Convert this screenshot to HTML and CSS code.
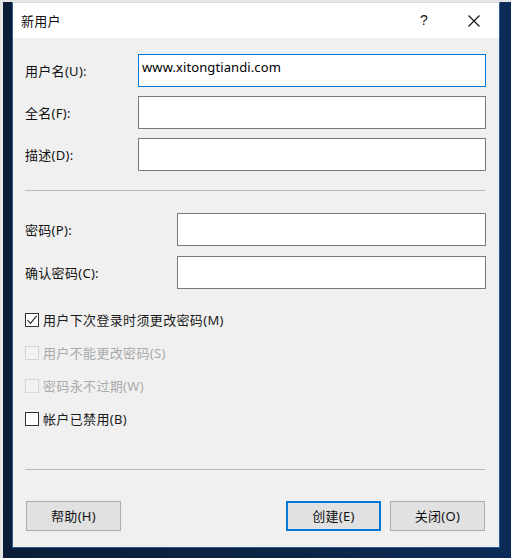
FILE: index.html
```html
<!DOCTYPE html>
<html lang="zh-CN">
<head>
<meta charset="utf-8">
<title>新用户</title>
<link rel="stylesheet" href="styles.css">
</head>
<body>
<div class="frame">
  <div class="dialog">
    <div class="titlebar">
      <span class="title">新用户</span>
      <div class="tb-buttons">
        <span class="tb-btn help">?</span>
        <span class="tb-btn close">
          <svg width="12" height="12" viewBox="0 0 12 12"><path d="M0.5 0.5 L11.5 11.5 M11.5 0.5 L0.5 11.5" stroke="#111" stroke-width="1.1" fill="none"/></svg>
        </span>
      </div>
    </div>
    <div class="content">
      <div class="group">
        <div class="row">
          <label class="lbl lbl-a">用户名(U):</label>
          <div class="input focused">www.xitongtiandi.com</div>
        </div>
        <div class="row">
          <label class="lbl lbl-a">全名(F):</label>
          <div class="input"></div>
        </div>
        <div class="row">
          <label class="lbl lbl-a">描述(D):</label>
          <div class="input"></div>
        </div>
      </div>
      <div class="sep sep1"></div>
      <div class="group pw">
        <div class="row">
          <label class="lbl lbl-b">密码(P):</label>
          <div class="input"></div>
        </div>
        <div class="row">
          <label class="lbl lbl-b">确认密码(C):</label>
          <div class="input"></div>
        </div>
      </div>
      <div class="checks">
        <div class="check">
          <span class="box">
            <svg width="12" height="12" viewBox="0 0 12 12"><path d="M1.5 6 L4.5 9.3 L10.6 1.8" stroke="#222" stroke-width="1.1" fill="none"/></svg>
          </span>
          <span class="ctext">用户下次登录时须更改密码(M)</span>
        </div>
        <div class="check disabled">
          <span class="box"></span>
          <span class="ctext">用户不能更改密码(S)</span>
        </div>
        <div class="check disabled">
          <span class="box"></span>
          <span class="ctext">密码永不过期(W)</span>
        </div>
        <div class="check">
          <span class="box"></span>
          <span class="ctext">帐户已禁用(B)</span>
        </div>
      </div>
      <div class="sep sep2"></div>
      <div class="buttons">
        <button class="btn">帮助(H)</button>
        <div class="spacer"></div>
        <button class="btn default">创建(E)</button>
        <button class="btn">关闭(O)</button>
      </div>
    </div>
  </div>
</div>
</body>
</html>
```

FILE: styles.css
```css
* { box-sizing: border-box; }
html, body { margin: 0; padding: 0; }
body {
  width: 511px;
  height: 558px;
  overflow: hidden;
  font-family: "Noto Sans", "Noto Sans CJK SC", sans-serif;
  font-size: 13px;
  color: #111;
}
.frame {
  width: 511px;
  height: 558px;
  background: linear-gradient(90deg, #0b1d38 0%, #0c2547 60%, #0b2c58 100%);
  border-left: 3px solid #e6e6e6;
  border-top: 2px solid #e6e6e6;
  padding: 0 11px 10px 9px;
  display: flex;
}
.dialog {
  flex: 1;
  display: flex;
  flex-direction: column;
  background: #f0f0f0;
  border: 1px solid #2d5c94;
  border-top-color: #d0d8e2;
}
.titlebar {
  height: 35px;
  background: #fff;
  display: flex;
  align-items: center;
  padding-left: 8px;
}
.title { font-size: 13px; line-height: 18px; letter-spacing: 0.3px; }
.tb-buttons {
  margin-left: auto;
  margin-right: 2px;
  display: flex;
  gap: 4px;
  height: 100%;
}
.tb-btn {
  width: 46px;
  display: flex;
  align-items: center;
  justify-content: center;
}
.help {
  font-family: "Liberation Sans", sans-serif;
  font-size: 14px;
  padding-bottom: 1px;
}
.close svg { display: block; }
.content {
  flex: 1;
  display: flex;
  flex-direction: column;
  padding: 16px 13px 0 12px;
}
.group { display: flex; flex-direction: column; gap: 9px; }
.group.pw { gap: 10px; margin-top: 22px; }
.row { display: flex; align-items: center; height: 33px; }
.lbl { flex: none; line-height: 18px; letter-spacing: 0.3px; }
.lbl-a { width: 113px; }
.lbl-b { width: 152px; }
.input {
  flex: 1;
  height: 100%;
  background: #fff;
  border: 1px solid #7a7a7a;
  padding: 3px 3px 0;
  line-height: 18px;
  font-size: 13px;
  letter-spacing: 0.1px;
  color: #000;
}
.input.focused { border-color: #0078d7; }
.sep { height: 1px; background: #b9b9b9; margin-right: 1px; }
.sep1 { margin-top: 19px; }
.sep2 { margin-top: 34px; }
.checks { display: flex; flex-direction: column; margin-top: 14px; }
.check { height: 33px; display: flex; align-items: center; }
.box {
  width: 14px;
  height: 14px;
  border: 1px solid #333;
  background: #fff;
  display: flex;
  align-items: center;
  justify-content: center;
  flex: none;
}
.box svg { display: block; }
.ctext { margin-left: 4px; line-height: 18px; letter-spacing: 0.35px; color: #1a1a1a; }
.check.disabled .box { border-color: #d6d6d6; background: #f3f3f3; }
.check.disabled .ctext { color: #aaaaaa; }
.buttons { display: flex; margin-top: 31px; gap: 9px; padding: 0 1px; }
.spacer { flex: 1; }
.btn {
  width: 95px;
  height: 30px;
  background: #e1e1e1;
  border: 1px solid #adadad;
  font-family: "Noto Sans", "Noto Sans CJK SC", sans-serif;
  font-size: 13px;
  letter-spacing: 0.3px;
  color: #111;
  padding: 0;
  line-height: 18px;
}
.btn.default { border: 2px solid #0078d7; }
```
